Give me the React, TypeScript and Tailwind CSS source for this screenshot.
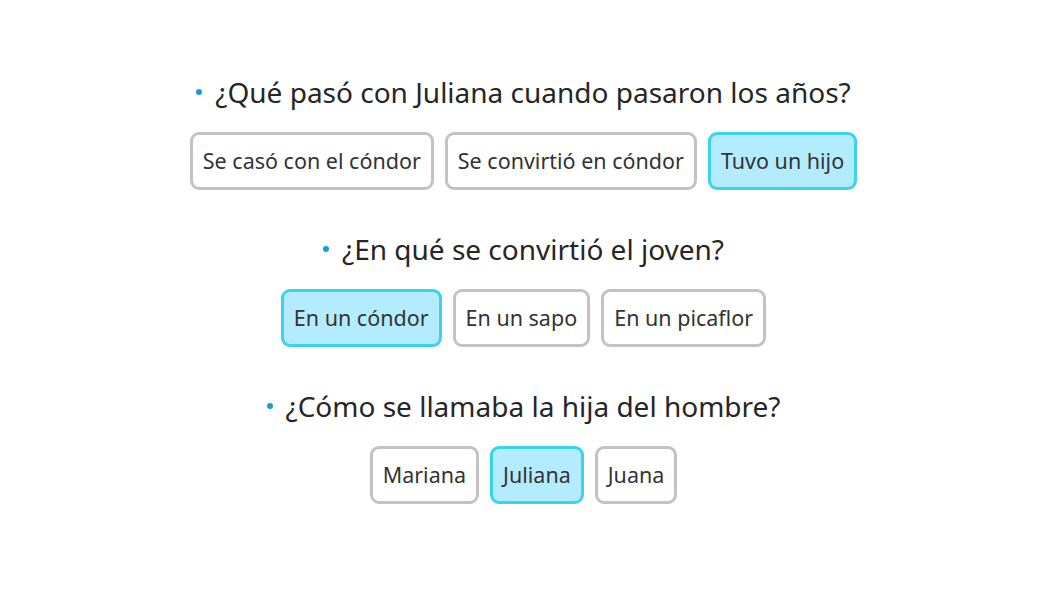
import React from "react";

const questions = [
  {
    q: "¿Qué pasó con Juliana cuando pasaron los años?",
    opts: ["Se casó con el cóndor", "Se convirtió en cóndor", "Tuvo un hijo"],
    sel: 2,
  },
  {
    q: "¿En qué se convirtió el joven?",
    opts: ["En un cóndor", "En un sapo", "En un picaflor"],
    sel: 0,
  },
  {
    q: "¿Cómo se llamaba la hija del hombre?",
    opts: ["Mariana", "Juliana", "Juana"],
    sel: 1,
  },
];

export default function App() {
  return (
    <div
      className="w-[1047px] h-[594px] bg-white flex flex-col items-center pt-[74px] gap-[41px]"
      style={{ fontFamily: '"Noto Sans", "Open Sans", sans-serif' }}
    >
      {questions.map((item, i) => (
        <div key={i} className="flex flex-col items-center gap-[22px]">
          <div className="flex items-center gap-[13px] text-[28px] leading-[36px] text-[#262626]">
            <span className="w-[6px] h-[6px] rounded-full bg-[#1c99d6]" />
            <span>{item.q}</span>
          </div>
          <div className="flex gap-[11px]">
            {item.opts.map((o, j) => (
              <div
                key={j}
                className={
                  j === item.sel
                    ? "h-[58px] px-[10px] flex items-center rounded-[9px] border-[3px] border-[#3ad2f2] bg-[#b3ecfe] text-[21.5px] text-[#333333]"
                    : "h-[58px] px-[10px] flex items-center rounded-[9px] border-[3px] border-[#c3c3c3] bg-white text-[21.5px] text-[#333333]"
                }
              >
                {o}
              </div>
            ))}
          </div>
        </div>
      ))}
    </div>
  );
}
